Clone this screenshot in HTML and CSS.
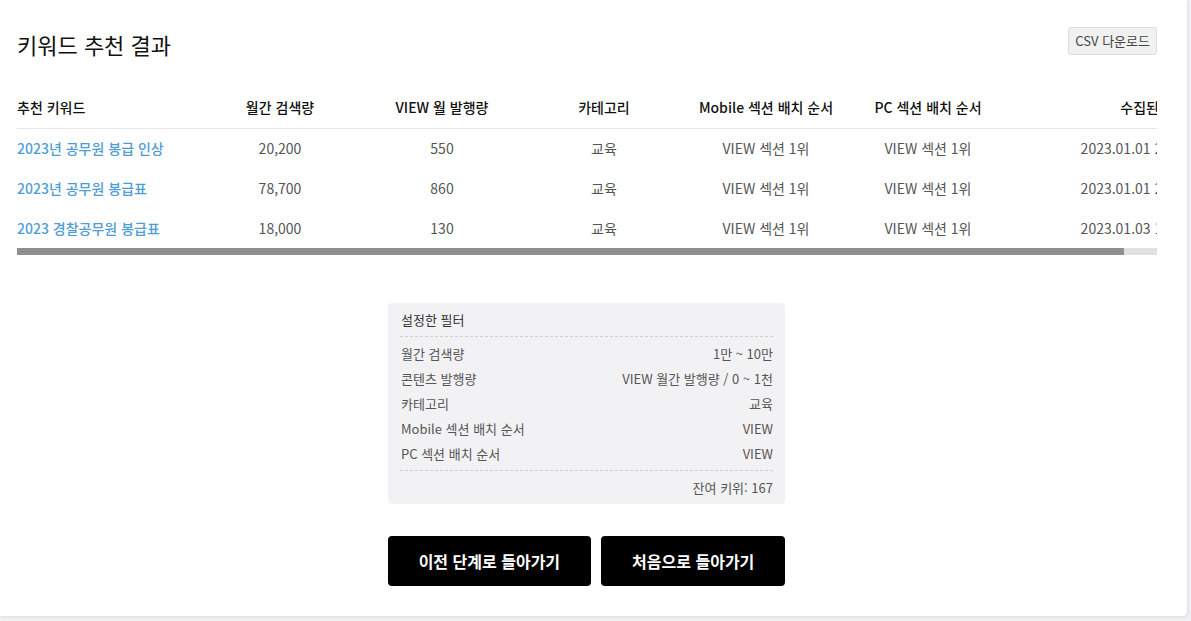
FILE: index.html
```html
<!DOCTYPE html>
<html lang="ko">
<head>
<meta charset="utf-8">
<title>키워드 추천 결과</title>
<link rel="stylesheet" href="styles.css">
</head>
<body>
<div class="card">
  <div class="topbar">
    <h1 class="title">키워드 추천 결과</h1>
    <button class="csv-btn">CSV 다운로드</button>
  </div>
  <div class="table-wrap">
    <div class="table-clip">
      <table class="result">
        <colgroup>
          <col class="c-first"><col class="c-mid"><col class="c-mid"><col class="c-mid"><col class="c-mid"><col class="c-mid"><col class="c-last">
        </colgroup>
        <thead>
          <tr>
            <th class="left">추천 키워드</th>
            <th>월간 검색량</th>
            <th>VIEW 월 발행량</th>
            <th>카테고리</th>
            <th>Mobile 섹션 배치 순서</th>
            <th>PC 섹션 배치 순서</th>
            <th>수집된 날짜</th>
          </tr>
        </thead>
        <tbody>
          <tr>
            <td class="left"><a class="kw">2023년 공무원 봉급 인상</a></td>
            <td>20,200</td><td>550</td><td>교육</td><td>VIEW 섹션 1위</td><td>VIEW 섹션 1위</td><td>2023.01.01 21:30:12.05</td>
          </tr>
          <tr>
            <td class="left"><a class="kw">2023년 공무원 봉급표</a></td>
            <td>78,700</td><td>860</td><td>교육</td><td>VIEW 섹션 1위</td><td>VIEW 섹션 1위</td><td>2023.01.01 21:30:12.05</td>
          </tr>
          <tr>
            <td class="left"><a class="kw">2023 경찰공무원 봉급표</a></td>
            <td>18,000</td><td>130</td><td>교육</td><td>VIEW 섹션 1위</td><td>VIEW 섹션 1위</td><td>2023.01.03 10:12:40.11</td>
          </tr>
        </tbody>
      </table>
    </div>
    <div class="hscroll"><div class="hscroll-thumb"></div></div>
  </div>

  <div class="filter-box">
    <div class="filter-title">설정한 필터</div>
    <div class="filter-rows">
      <div class="filter-row"><span>월간 검색량</span><span>1만 ~ 10만</span></div>
      <div class="filter-row"><span>콘텐츠 발행량</span><span>VIEW 월간 발행량 / 0 ~ 1천</span></div>
      <div class="filter-row"><span>카테고리</span><span>교육</span></div>
      <div class="filter-row"><span>Mobile 섹션 배치 순서</span><span>VIEW</span></div>
      <div class="filter-row"><span>PC 섹션 배치 순서</span><span>VIEW</span></div>
    </div>
    <div class="filter-foot">잔여 키위: 167</div>
  </div>

  <div class="actions">
    <button class="black-btn">이전 단계로 들아가기</button>
    <button class="black-btn">처음으로 들아가기</button>
  </div>
</div>
</body>
</html>
```
FILE: styles.css
```css
* { box-sizing: border-box; }
html, body { margin: 0; padding: 0; }
body {
  background: #f0f0f2;
  font-family: "Noto Sans CJK KR", "Noto Sans", sans-serif;
  color: #333;
  width: 1191px;
  height: 621px;
  overflow: hidden;
}
.card {
  width: 1187px;
  height: 616px;
  background: #fff;
  border-radius: 0 0 4px 0;
  box-shadow: 1px 1px 3px rgba(0,0,0,0.08);
  padding: 26px 31px 0 17px;
}
.topbar {
  display: flex;
  justify-content: space-between;
  align-items: flex-start;
  width: 1140px;
}
.title {
  margin: 0;
  font-size: 22px;
  font-weight: 400;
  line-height: 36px;
  color: #111;
}
.csv-btn {
  margin-top: 1px;
  height: 28px;
  padding: 0 6px;
  background: #f1f1f1;
  border: 1px solid #dcdcdc;
  border-radius: 3px;
  font-family: inherit;
  font-size: 13px;
  color: #444;
  line-height: 26px;
}
.table-wrap {
  margin-top: 25px;
  width: 1140px;
}
.table-clip {
  width: 1140px;
  overflow: hidden;
}
.result {
  border-collapse: collapse;
  table-layout: fixed;
  width: 1283px;
  font-size: 14px;
}
.c-first { width: 182px; }
.c-mid { width: 162px; }
.c-last { width: 291px; }
.result th {
  height: 41px;
  font-weight: 500;
  color: #111;
  text-align: center;
  white-space: nowrap;
  border-bottom: 1px solid #e6e6e6;
  padding: 0;
}
.result td {
  height: 40px;
  text-align: center;
  color: #555;
  white-space: nowrap;
  padding: 0;
}
.result .left { text-align: left; }
.kw {
  color: #4f9dd5;
  font-weight: 500;
  text-decoration: none;
}
.hscroll {
  height: 7px;
  background: #e1e1e1;
}
.hscroll-thumb {
  width: 1107px;
  height: 7px;
  background: #8f8f8f;
}
.filter-box {
  width: 397px;
  margin: 48px auto 0;
  background: #f2f2f4;
  border-radius: 4px;
  padding: 0 12px;
  font-size: 13px;
  color: #555;
}
.filter-title {
  height: 34px;
  line-height: 34px;
  color: #333;
  padding-left: 1px;
  border-bottom: 1px dashed #cfcfd2;
}
.filter-rows {
  padding: 4px 0 4px 1px;
  border-bottom: 1px dashed #cfcfd2;
}
.filter-row {
  display: flex;
  justify-content: space-between;
  height: 25px;
  line-height: 25px;
}
.filter-foot {
  height: 33px;
  line-height: 33px;
  text-align: right;
}
.actions {
  display: flex;
  justify-content: center;
  gap: 10px;
  margin-top: 32px;
}
.black-btn {
  height: 50px;
  padding: 0 31px;
  background: #000;
  color: #fff;
  border: none;
  border-radius: 4px;
  font-family: inherit;
  font-size: 16px;
  font-weight: 700;
}
```
